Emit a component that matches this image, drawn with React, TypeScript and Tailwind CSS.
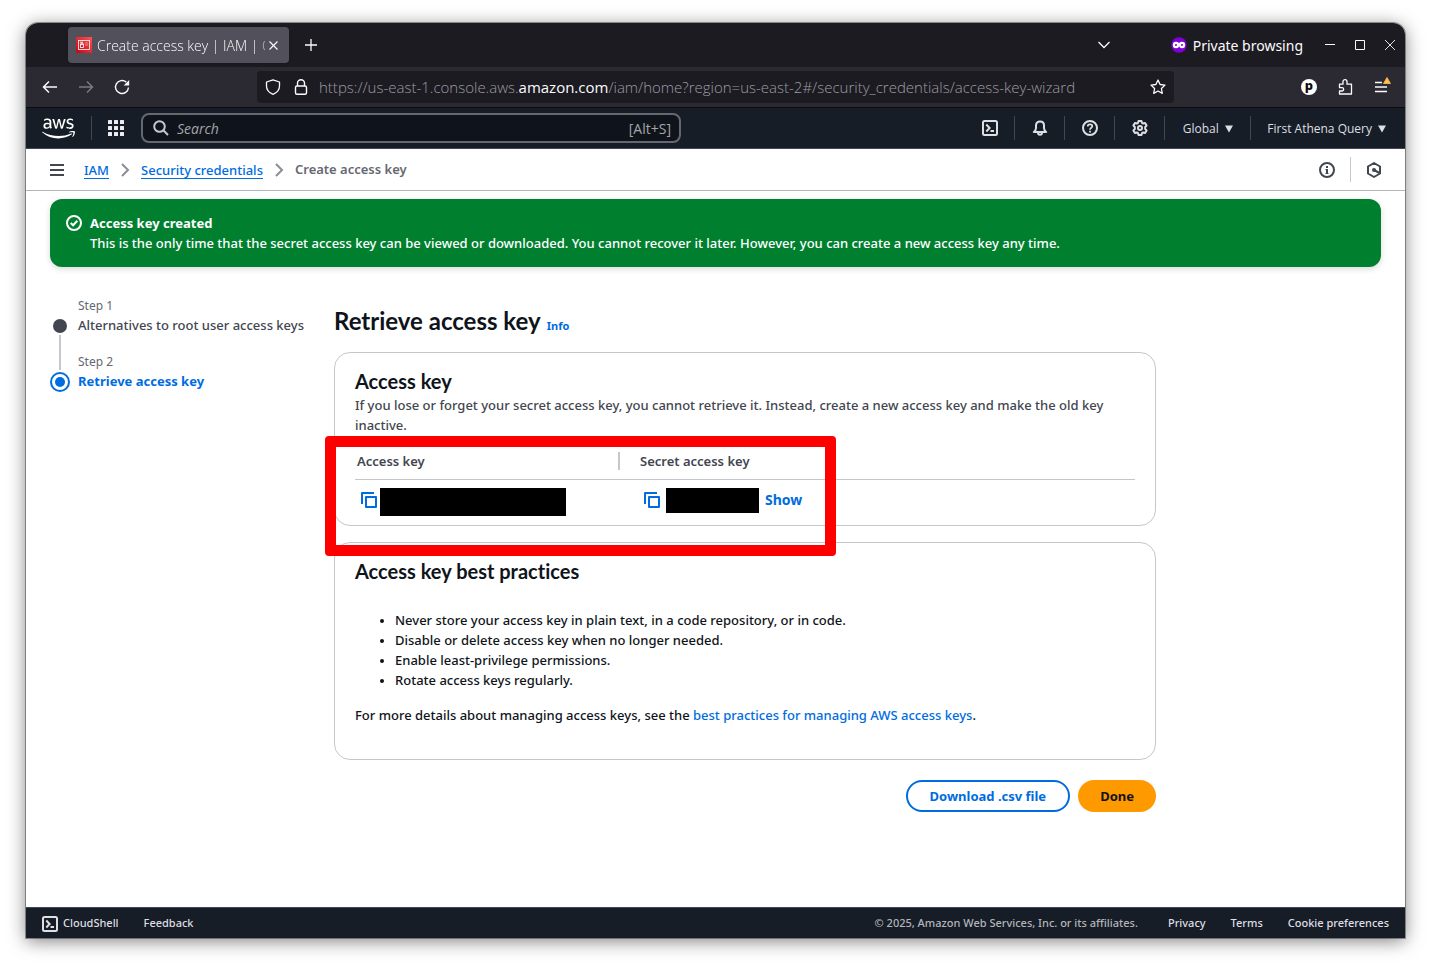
import React from "react";
import { FaAws } from "react-icons/fa";

type IconProps = { className?: string };

const ShellIcon = ({ className = "" }: IconProps) => (
  <svg className={`size-4 shrink-0 ${className}`} viewBox="0 0 16 16" fill="none" stroke="currentColor" strokeWidth="2" aria-hidden="true">
    <rect x="1" y="1" width="14" height="14" rx="1.5" />
    <path d="M4.3 4.5 7.6 8l-3.3 3.5M8.5 11H12" />
  </svg>
);

const BellIcon = () => (
  <svg className="size-4" viewBox="0 0 16 16" fill="none" stroke="currentColor" strokeWidth="2" strokeLinejoin="round" aria-hidden="true">
    <path d="M1.8 12c1.7-1 2.2-2.2 2.2-4V5.4C4 3 5.700 1.400 8 1.400S12 3 12 5.400V8c0 1.800.5 3 2.200 4z" />
    <path d="M6 12.500c0 1.400.8 2.200 2 2.200s2-.8 2-2.200" />
  </svg>
);

const HelpIcon = () => (
  <svg className="size-4" viewBox="0 0 16 16" fill="none" stroke="currentColor" strokeWidth="2" aria-hidden="true">
    <circle cx="8" cy="8" r="7" />
    <path d="M5.700 6.400C5.700 5 6.700 4.300 8 4.300s2.300.8 2.300 2C10.300 7.800 8 7.800 8 9.700" strokeWidth="1.700" />
    <path d="M8 10.700v1.800" strokeWidth="1.800" />
  </svg>
);

const GearIcon = () => (
  <svg className="size-4" viewBox="0 0 16 16" fill="none" stroke="currentColor" strokeWidth="2" strokeLinejoin="round" aria-hidden="true">
    <path d="M6.500 1h3l.5 1.900 1.100.6 2-.5 1.500 2.500-1.400 1.500v2l1.400 1.500-1.500 2.500-2-.5-1.100.6L9.500 15h-3L6 13.100l-1.100-.6-2 .5-1.500-2.500L2.800 9V7L1.400 5.500 2.900 3l2 .5L6 2.900z" />
    <circle cx="8" cy="8" r="2" />
  </svg>
);

const InfoIcon = () => (
  <svg className="size-4" viewBox="0 0 16 16" fill="none" stroke="currentColor" strokeWidth="2" aria-hidden="true">
    <circle cx="8" cy="8" r="7" />
    <path d="M8 4v2M8 7v5" />
    <path d="M6.500 7.500H8M6.500 11.500h3" strokeWidth="1" />
  </svg>
);

const HexIcon = () => (
  <svg className="size-4" viewBox="0 0 16 16" fill="none" stroke="currentColor" strokeWidth="2" strokeLinejoin="round" aria-hidden="true">
    <path d="M8 1 14 4.500v7L8 15l-6-3.500v-7z" />
    <circle cx="8" cy="8" r="2" fill="currentColor" stroke="none" />
    <path d="m8 8 5.500 3" />
  </svg>
);

const CopyIcon = () => (
  <svg className="size-4" viewBox="0 0 16 16" fill="none" stroke="currentColor" strokeWidth="2" strokeLinejoin="round" aria-hidden="true">
    <path d="M1 12V1h12" />
    <rect x="5" y="5" width="10" height="10" />
  </svg>
);

const Chevron = () => (
  <svg className="size-4 text-[#8c8c94]" viewBox="0 0 16 16" fill="none" stroke="currentColor" strokeWidth="2" aria-hidden="true">
    <path d="m5 2 6 6-6 6" />
  </svg>
);

const Caret = () => (
  <svg className="h-2 w-2" viewBox="0 0 8 8" fill="currentColor" aria-hidden="true">
    <path d="M0 .5h8L4 7.500z" />
  </svg>
);

function TabStrip() {
  return (
    <div className="flex h-11 items-center bg-[#1c1b22] pl-[42px] text-[#fbfbfe]">
      <div className="flex h-9 w-[221px] items-center rounded bg-[#52515b] pr-2 pl-2 shadow-sm">
        <svg className="size-4 shrink-0" viewBox="0 0 16 16" aria-hidden="true">
          <defs>
            <linearGradient id="fav" x1="0" y1="1" x2="1" y2="0">
              <stop offset="0" stopColor="#bd0816" />
              <stop offset="1" stopColor="#ff5252" />
            </linearGradient>
          </defs>
          <rect width="16" height="16" fill="url(#fav)" />
          <g fill="none" stroke="#fff" strokeWidth=".8">
            <rect x="2.500" y="3.500" width="11" height="9" />
            <rect x="4.500" y="7.500" width="3" height="3" />
            <path d="M5 7.500V6h2v1.500M4 5.200h3" />
            <path d="M9 6h3M9 8h3" opacity=".5" />
          </g>
        </svg>
        <span className="ml-[5px] min-w-0 flex-1 font-['Open_Sans'] text-[14px] font-light whitespace-nowrap [mask-image:linear-gradient(to_right,black_160px,transparent_176px)]">
          Create access key | IAM | C
        </span>
        <button aria-label="Close tab" className="flex size-4 items-center justify-center">
          <svg className="size-[9px]" viewBox="0 0 9 9" stroke="currentColor" strokeWidth="1.100"><path d="m.5.5 8 8m0-8-8 8" /></svg>
        </button>
      </div>
      <button aria-label="New tab" className="ml-4 flex size-3">
        <svg viewBox="0 0 12 12" stroke="currentColor" strokeWidth="1.300"><path d="M6 0v12M0 6h12" /></svg>
      </button>
      <div className="flex-1" />
      <button aria-label="List all tabs" className="mr-[61px]">
        <svg className="h-2 w-3" viewBox="0 0 12 8" fill="none" stroke="currentColor" strokeWidth="1.300"><path d="m.5 1 5.500 5.500L11.500 1" /></svg>
      </button>
      <svg className="size-4" viewBox="0 0 16 16" aria-hidden="true">
        <circle cx="8" cy="8" r="7.700" fill="#8000d7" />
        <g fill="none" stroke="#fff" strokeWidth="2.200">
          <circle cx="5" cy="8" r="2.100" />
          <circle cx="11" cy="8" r="2.100" />
          <path d="M7 7.500h2" />
        </g>
      </svg>
      <span className="ml-[6px] text-[14px]">Private browsing</span>
      <div className="ml-3 flex">
        <button aria-label="Minimise" className="flex h-8 w-[30px] items-center justify-center">
          <svg className="size-[10px]" viewBox="0 0 10 10" stroke="currentColor"><path d="M0 4.500h10" /></svg>
        </button>
        <button aria-label="Maximise" className="flex h-8 w-[30px] items-center justify-center">
          <svg className="size-[10px]" viewBox="0 0 10 10" fill="none" stroke="currentColor"><path d="M.5.500h9v9h-9z" /></svg>
        </button>
        <button aria-label="Close window" className="flex h-8 w-[30px] items-center justify-center">
          <svg className="size-[10px]" viewBox="0 0 10 10" stroke="currentColor" strokeWidth=".9"><path d="m0 0 10 10m0-10L0 10" /></svg>
        </button>
      </div>
    </div>
  );
}

function Toolbar() {
  return (
    <div className="flex h-[41px] items-center border-b border-[#0c0c0d] bg-[#2b2a33] px-4 text-[#fbfbfe]">
      <div className="flex gap-5">
        <button aria-label="Back">
          <svg className="size-4" viewBox="0 0 16 16" fill="none" stroke="currentColor" strokeWidth="1.500"><path d="M15 8H1.500M7 2.500 1.500 8 7 13.500" /></svg>
        </button>
        <button aria-label="Forward" className="text-[#7a7980]">
          <svg className="size-4" viewBox="0 0 16 16" fill="none" stroke="currentColor" strokeWidth="1.500"><path d="M1 8h13.500M9 2.500 14.500 8 9 13.500" /></svg>
        </button>
        <button aria-label="Reload">
          <svg className="size-4" viewBox="0 0 16 16" fill="none" stroke="currentColor" strokeWidth="1.400">
            <path d="M14.500 8.500A6.500 6.500 0 1 1 12.300 3.100" />
            <path d="M15.200 1v5.500H9.700z" fill="currentColor" stroke="none" />
          </svg>
        </button>
      </div>
      <div className="mr-[127px] ml-[127px] flex h-8 min-w-0 flex-1 items-center rounded bg-[#1c1b22] px-2">
        <svg className="size-4 shrink-0" viewBox="0 0 16 16" fill="none" stroke="currentColor" strokeWidth="1.300" aria-hidden="true">
          <path d="M8 .8 14.500 3v4c0 4-2.500 6.700-6.500 8.300C4 13.700 1.500 11 1.500 7V3z" strokeLinejoin="round" />
        </svg>
        <svg className="ml-3 size-4 shrink-0" viewBox="0 0 16 16" fill="none" stroke="currentColor" strokeWidth="1.400" aria-hidden="true">
          <rect x="2.500" y="7" width="11" height="8.200" rx="1.500" />
          <path d="M4.500 7V4.300a3.500 3.500 0 0 1 7 0V7" />
        </svg>
        <div role="textbox" aria-label="Address" className="ml-[10px] flex-1 overflow-hidden font-['Open_Sans'] text-[15px] font-light whitespace-nowrap text-[#9c9ca3]">
          https://us-east-1.console.aws.<span className="font-normal text-[#fbfbfe]">amazon.com</span>/iam/home?region=us-east-2#/security_credentials/access-key-wizard
        </div>
        <button aria-label="Bookmark this page">
          <svg className="size-4" viewBox="0 0 16 16" fill="none" stroke="currentColor" strokeWidth="1.300" strokeLinejoin="round">
            <path d="m8 1 2.100 4.500 4.900.6-3.600 3.400.9 4.900L8 12l-4.300 2.400.9-4.900L1 6.100l4.900-.6z" />
          </svg>
        </button>
      </div>
      <div className="flex gap-5">
        <button aria-label="Extension" className="flex size-4 items-center justify-center rounded-full bg-white text-[13px] leading-none font-extrabold text-[#0c0c0d]">
          <span className="mb-1">p</span>
        </button>
        <button aria-label="Extensions">
          <svg className="size-4" viewBox="0 0 16 16" fill="none" stroke="currentColor" strokeWidth="1.300" strokeLinejoin="round">
            <path d="M2.500 5.200H6V2.700a2 2 0 0 1 4 0v2.500h4.500V15h-12v-3H5a1.400 1.400 0 0 0 0-3.300H2.500z" />
          </svg>
        </button>
        <button aria-label="Menu">
          <svg className="size-4 overflow-visible" viewBox="0 0 16 16" fill="none" stroke="currentColor" strokeWidth="1.300">
            <path d="M2 3.500h7M2 8h12M2 12.500h12" />
            <path d="M14-1.500 17.500 4.500h-7z" fill="#ffbd4f" stroke="#ffbd4f" strokeWidth=".8" strokeLinejoin="round" />
          </svg>
        </button>
      </div>
    </div>
  );
}

const navButton = "flex w-[50px] items-center justify-center";

function AwsNav() {
  return (
    <header className="flex h-[41px] items-center border-b border-[#424650] bg-[#161d26] font-['Open_Sans'] text-[#dedee3]">
      <a href="#home" aria-label="AWS home" className="ml-4 text-white">
        <FaAws size={33} />
      </a>
      <span className="ml-4 h-6 w-px bg-[#424650]" />
      <button aria-label="Services" className="ml-4">
        <svg className="size-4" viewBox="0 0 16 16" fill="#ebebf0">
          {[0, 6, 12].map((y) => [0, 6, 12].map((x) => <rect key={`${x}-${y}`} x={x} y={y} width="4" height="4" rx=".5" />))}
        </svg>
      </button>
      <label className="ml-[17px] flex h-[30px] w-[540px] min-w-0 items-center rounded-lg border-2 border-[#656871] bg-[#0f141a] pr-2 pl-[10px]">
        <svg className="size-4 shrink-0" viewBox="0 0 16 16" fill="none" stroke="#c6c6cd" strokeWidth="2" aria-hidden="true">
          <circle cx="6.500" cy="6.500" r="5.300" />
          <path d="m10.300 10.300 4.700 4.700" />
        </svg>
        <input aria-label="Search" placeholder="Search" className="ml-2 min-w-0 flex-1 bg-transparent text-[14px] outline-none placeholder:text-[#a4a4ad] placeholder:italic" />
        <span className="text-[14px] text-[#a4a4ad]">[Alt+S]</span>
      </label>
      <div className="ml-auto flex h-6 items-stretch divide-x divide-[#424650] text-[12px]">
        <button aria-label="CloudShell" className={navButton}><ShellIcon /></button>
        <button aria-label="Notifications" className={navButton}><BellIcon /></button>
        <button aria-label="Help" className={navButton}><HelpIcon /></button>
        <button aria-label="Settings" className={navButton}><GearIcon /></button>
        <button className="flex w-[86px] items-center justify-center gap-[6px] pt-px">Global <Caret /></button>
        <button className="flex items-center gap-[6px] pt-px pr-[19px] pl-4 whitespace-nowrap">First Athena Query <Caret /></button>
      </div>
    </header>
  );
}

function Breadcrumbs() {
  return (
    <div className="flex h-[42px] items-center border-b border-[#b4b4bb] pr-[23px] pl-[23px] text-[#424650]">
      <button aria-label="Open navigation">
        <svg className="size-4" viewBox="0 0 16 16" stroke="currentColor" strokeWidth="2"><path d="M1 3h14M1 8h14M1 13h14" /></svg>
      </button>
      <nav aria-label="Breadcrumbs" className="ml-[19px] flex items-center gap-2 pt-px">
        <a href="#iam" className="border-b border-[#006ce0] leading-4 text-[#006ce0]">IAM</a>
        <Chevron />
        <a href="#security" className="border-b border-[#006ce0] leading-4 text-[#006ce0]">Security credentials</a>
        <Chevron />
        <span className="font-semibold text-[#656871]">Create access key</span>
      </nav>
      <button aria-label="Info" className="ml-auto"><InfoIcon /></button>
      <span className="mx-[15px] h-[25px] w-px bg-[#c6c6cd]" />
      <button aria-label="Assistant"><HexIcon /></button>
    </div>
  );
}

function Steps() {
  return (
    <ol className="w-[284px] shrink-0 pt-[30px]">
      <li className="flex h-14 gap-2">
        <div className="flex w-5 flex-col items-center pt-[22px]">
          <span className="size-[14px] shrink-0 rounded-full bg-[#424650]" />
          <span className="mt-[2px] h-[35px] w-[2px] shrink-0 bg-[#c6c6cd]" />
        </div>
        <div>
          <p className="text-[12px] leading-[18px] font-normal text-[#656871]">Step 1</p>
          <p className="leading-5 text-[#424650]">Alternatives to root user access keys</p>
        </div>
      </li>
      <li className="flex gap-2">
        <div className="pt-[19px]">
          <span className="flex size-5 items-center justify-center rounded-full border-2 border-[#006ce0]">
            <span className="size-[10px] rounded-full bg-[#006ce0]" />
          </span>
        </div>
        <div>
          <p className="text-[12px] leading-[18px] font-normal text-[#656871]">Step 2</p>
          <p className="leading-5 font-bold text-[#006ce0]">Retrieve access key</p>
        </div>
      </li>
    </ol>
  );
}

const cardTitle = "font-['Lato'] text-[20px] leading-6 font-bold [font-variant-ligatures:none]";

function KeyCard() {
  return (
    <section className="relative h-[174px] rounded-2xl border border-[#c6c6cd] px-5 pt-4">
      <h2 className={cardTitle}>Access key</h2>
      <p className="mt-[2px] leading-5 text-[#424650]">
        If you lose or forget your secret access key, you cannot retrieve it. Instead, create a new access key and make the old key inactive.
      </p>
      <table className="mt-2 w-full table-fixed text-left">
        <thead>
          <tr className="h-9 border-b border-[#c6c6cd] text-[#424650]">
            <th scope="col" className="w-[265px] p-0 font-semibold">
              <div className="flex h-[18px] items-center border-r-2 border-[#c6c6cd] pt-px pl-[2px]">Access key</div>
            </th>
            <th scope="col" className="p-0 pt-px pl-5 font-semibold">Secret access key</th>
          </tr>
        </thead>
        <tbody>
          <tr className="align-top text-[#006ce0]">
            <td className="p-0 pt-2 pl-[6px]">
              <div className="flex items-start gap-[3px]">
                <button aria-label="Copy access key" className="flex h-6 items-center"><CopyIcon /></button>
                <span className="h-7 w-[186px] bg-black" />
              </div>
            </td>
            <td className="p-0 pt-2 pl-6">
              <div className="flex items-start gap-[6px]">
                <button aria-label="Copy secret access key" className="flex h-6 items-center"><CopyIcon /></button>
                <span className="h-[25px] w-[93px] bg-black" />
                <button className="h-6 text-[14px] font-bold">Show</button>
              </div>
            </td>
          </tr>
        </tbody>
      </table>
      <div className="pointer-events-none absolute top-[83px] -left-[10px] h-[120px] w-[511px] rounded border-[11px] border-[#ff0000]" />
    </section>
  );
}

const practices = [
  "Never store your access key in plain text, in a code repository, or in code.",
  "Disable or delete access key when no longer needed.",
  "Enable least-privilege permissions.",
  "Rotate access keys regularly.",
];

export default function App() {
  return (
    <div className="flex min-h-screen flex-col bg-white px-[26px] pt-[23px] pb-[29px] font-['Noto_Sans',sans-serif] text-[13px] text-[#0f141a]">
      <div className="flex flex-1 flex-col overflow-hidden rounded-t-xl bg-white shadow-[0_0_0_1px_rgba(0,0,0,0.35),0_3px_18px_rgba(0,0,0,0.5)]">
        <TabStrip />
        <Toolbar />
        <AwsNav />
        <div className="flex flex-1 flex-col font-medium">
          <Breadcrumbs />
          <main className="flex-1 px-6 pt-2 pb-8">
            <div role="status" className="flex gap-2 rounded-xl bg-[#00802f] px-4 py-[14px] leading-5 text-white shadow-[0_2px_6px_rgba(0,7,22,0.15)]">
              <svg className="mt-[2px] size-4 shrink-0" viewBox="0 0 16 16" fill="none" stroke="currentColor" strokeWidth="2" aria-hidden="true">
                <circle cx="8" cy="8" r="7" />
                <path d="m4.700 8 2.400 2.300 4.200-4.500" />
              </svg>
              <div>
                <p className="font-bold">Access key created</p>
                <p>This is the only time that the secret access key can be viewed or downloaded. You cannot recover it later. However, you can create a new access key any time.</p>
              </div>
            </div>
            <div className="flex">
              <Steps />
              <div className="max-w-[822px] min-w-0 flex-1 pt-[39px]">
                <div className="flex items-baseline gap-[6px]">
                  <h1 className="font-['Lato'] text-[24px] leading-[30px] font-bold">Retrieve access key</h1>
                  <a href="#info" className="text-[11px] font-bold text-[#006ce0]">Info</a>
                </div>
                <div className="mt-4 flex flex-col gap-4">
                  <KeyCard />
                  <section className="rounded-2xl border border-[#c6c6cd] px-5 pt-4 pb-[34px]">
                    <h2 className={cardTitle}>Access key best practices</h2>
                    <ul className="mt-[27px] list-disc pl-10 leading-5 marker:text-[11px]">
                      {practices.map((p) => <li key={p}>{p}</li>)}
                    </ul>
                    <p className="mt-[15px] leading-5">
                      For more details about managing access keys, see the <a href="#practices" className="text-[#006ce0]">best practices for managing AWS access keys</a>.
                    </p>
                  </section>
                </div>
                <div className="mt-5 flex justify-end gap-2 font-bold">
                  <button className="h-8 rounded-full border-2 border-[#006ce0] px-[22px] pt-px text-[#006ce0]">Download .csv file</button>
                  <button className="h-8 rounded-full bg-[#ff9900] px-[22px] pt-px">Done</button>
                </div>
              </div>
            </div>
          </main>
          <footer className="flex h-[31px] items-center border-t border-[#424650] bg-[#161d26] px-4 pt-px text-[11px] text-[#dedee3]">
            <button className="flex items-center gap-[5px]"><ShellIcon /> CloudShell</button>
            <a href="#feedback" className="ml-[25px]">Feedback</a>
            <span className="ml-auto text-[#b4b4bb]">© 2025, Amazon Web Services, Inc. or its affiliates.</span>
            <a href="#privacy" className="ml-[30px]">Privacy</a>
            <a href="#terms" className="ml-[25px]">Terms</a>
            <a href="#cookies" className="ml-[25px]">Cookie preferences</a>
          </footer>
        </div>
      </div>
    </div>
  );
}
